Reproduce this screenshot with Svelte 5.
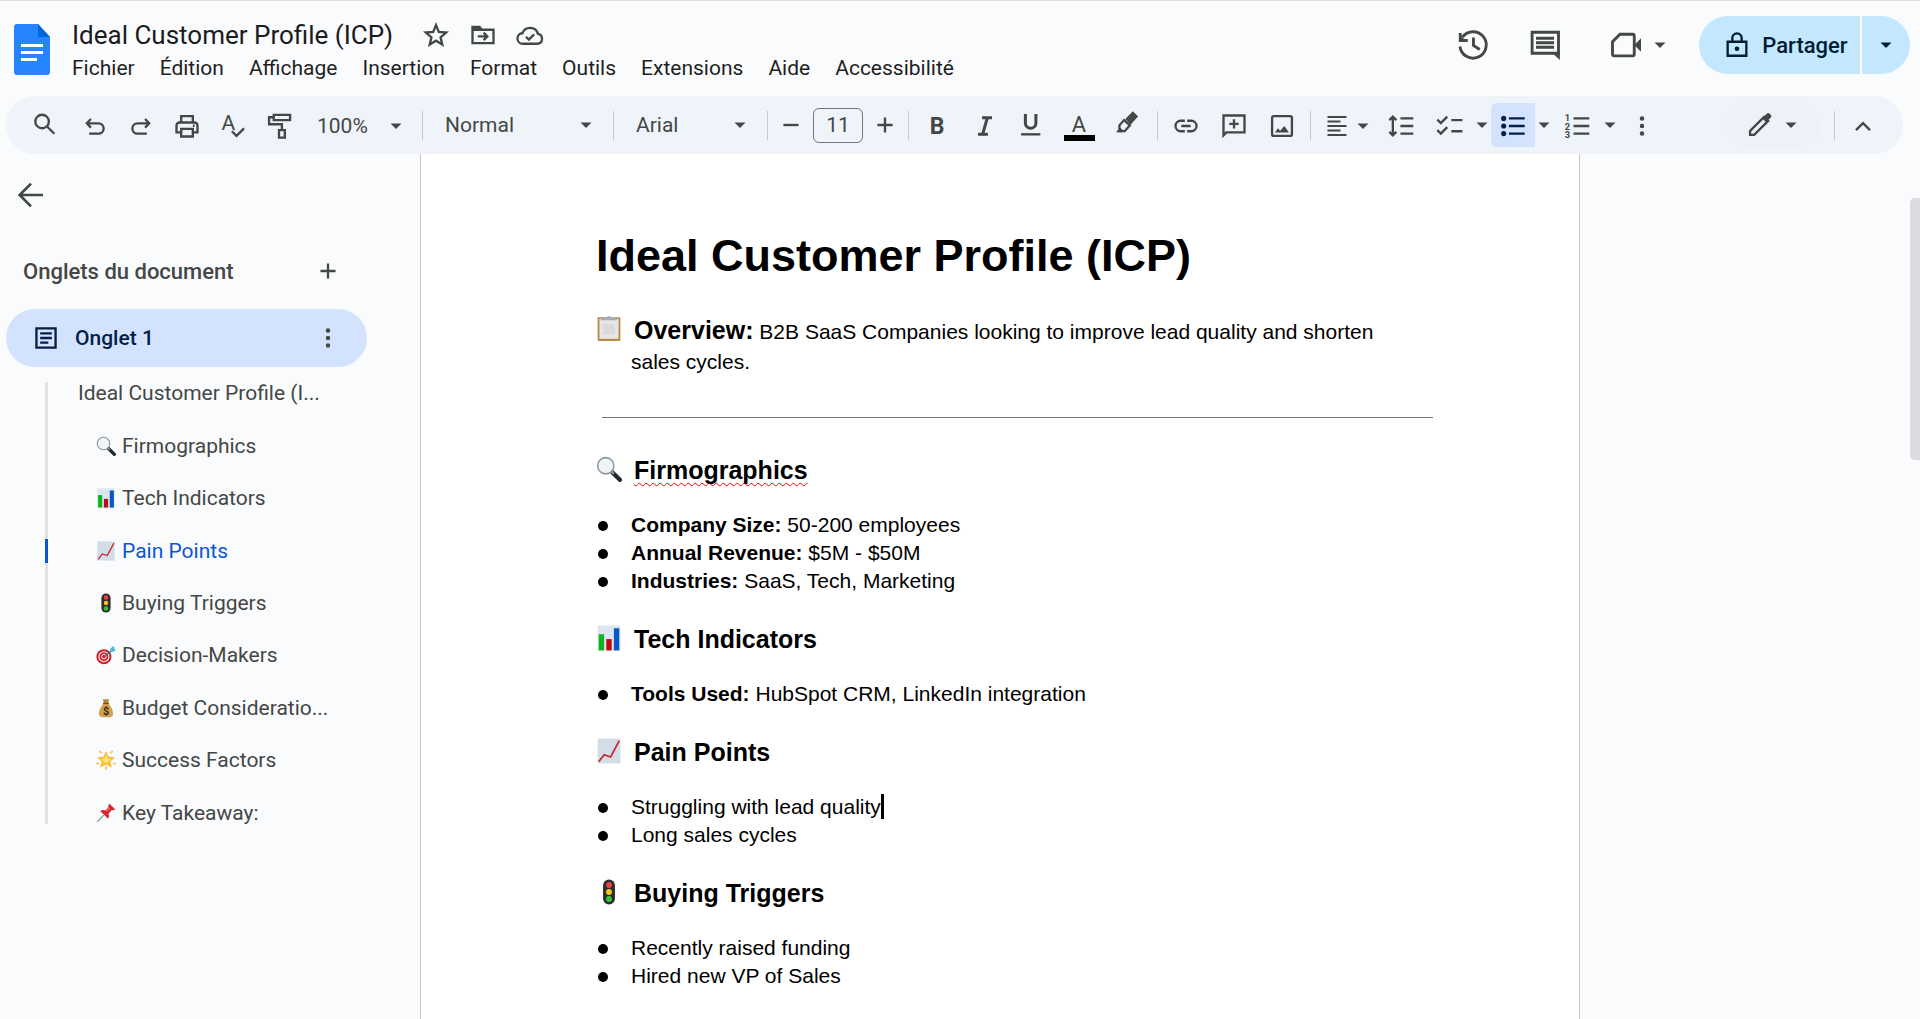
<script>
  const menus = [
    "Fichier",
    "Édition",
    "Affichage",
    "Insertion",
    "Format",
    "Outils",
    "Extensions",
    "Aide",
    "Accessibilité",
  ];

  const outline = [
    { icon: "search", label: "Firmographics" },
    { icon: "bars", label: "Tech Indicators" },
    { icon: "chart", label: "Pain Points" },
    { icon: "light", label: "Buying Triggers" },
    { icon: "target", label: "Decision-Makers" },
    { icon: "money", label: "Budget Consideratio..." },
    { icon: "star", label: "Success Factors" },
    { icon: "pin", label: "Key Takeaway:" },
  ];

  const sections = [
    {
      icon: "search",
      title: "Firmographics",
      misspelled: true,
      items: [
        { name: "Company Size:", text: "50-200 employees" },
        { name: "Annual Revenue:", text: "$5M - $50M" },
        { name: "Industries:", text: "SaaS, Tech, Marketing" },
      ],
    },
    {
      icon: "bars",
      title: "Tech Indicators",
      items: [{ name: "Tools Used:", text: "HubSpot CRM, LinkedIn integration" }],
    },
    {
      icon: "chart",
      title: "Pain Points",
      items: [
        { text: "Struggling with lead quality", caret: true },
        { text: "Long sales cycles" },
      ],
    },
    {
      icon: "light",
      title: "Buying Triggers",
      items: [{ text: "Recently raised funding" }, { text: "Hired new VP of Sales" }],
    },
  ];

  let docTitle = $state("Ideal Customer Profile (ICP)");
  let fontSize = $state(11);
  let active = $state("Pain Points");
</script>

{#snippet caret()}
  <svg class="caret" viewBox="0 0 20 20" aria-hidden="true"><path d="M4.500 7.500h11L10 13z" /></svg>
{/snippet}

{#snippet emoji(name)}
  <svg class="emoji" viewBox="0 0 24 24" aria-hidden="true">
    {#if name === "search"}
      <path d="M15 15l7 7" stroke="#26292c" stroke-width="4" stroke-linecap="round" />
      <path d="M13.500 13.500l3 3" stroke="#8a949c" stroke-width="2" />
      <circle cx="9" cy="9" r="7.500" fill="#f1f4f5" stroke="#8796a3" stroke-width="1.400" />
    {:else if name === "bars"}
      <path d="M1.500 0.500h21v23h-21z" fill="#dce6f0" />
      <path d="M2.500 8.500h5v15h-5z" fill="#0cb51c" />
      <path d="M9.500 13h5v10.500h-5z" fill="#c00a14" />
      <path d="M16.500 3h5v20.500h-5z" fill="#0a58c6" />
    {:else if name === "chart"}
      <path d="M1.500 0.500h21v23h-21z" fill="#d3dde5" />
      <path d="M2.500 22l5-6.500 6 2 8-15" fill="none" stroke="#c8222b" stroke-width="1.500" />
    {:else if name === "light"}
      <rect x="6.500" y="0.500" width="11" height="23" rx="5.500" fill="#2c2d2e" />
      <circle cx="12" cy="5.500" r="2.700" fill="#ee3f46" />
      <circle cx="12" cy="12" r="2.700" fill="#f7c51e" />
      <circle cx="12" cy="18.500" r="2.700" fill="#35c534" />
    {:else if name === "target"}
      <circle cx="9.500" cy="14" r="9" fill="#cf1f2c" />
      <circle cx="9.500" cy="14" r="6" fill="none" stroke="#fff" stroke-width="1.300" />
      <circle cx="9.500" cy="14" r="2.700" fill="none" stroke="#fff" stroke-width="1.200" />
      <path d="M10 14l9-7" stroke="#267f93" stroke-width="1.500" />
      <path d="M16.500 8.500l1-4.500 4-3 .5 3.500 2 1.500-3.500 2.500z" fill="#57bccb" />
    {:else if name === "money"}
      <path d="M8 1l2 1 2-1 2 1 2-1-1.500 5h-5z" fill="#b98432" />
      <path d="M9 6.500h6c3 3 5.500 8 5.500 12 0 3-2 4.500-4.500 4.500H8c-2.500 0-4.500-1.500-4.500-4.500 0-4 2.500-9 5.500-12z" fill="#d0a04e" />
      <path d="M8.500 6.500h7" stroke="#73511f" stroke-width="1.500" />
      <text x="12" y="20" font-size="13" font-weight="700" text-anchor="middle" fill="#33291a">$</text>
    {:else if name === "star"}
      <path d="M12 2.500l2.800 6 7.200.7-5.300 4.600 1.800 6.700-6.500-3.500L5.500 20.500l1.800-6.700L2 9.200l7.200-.7z" fill="#fbc62c" stroke="#f2a51b" stroke-width=".6" />
      <path d="M12 6l1.800 4.500 4 .5-3.500 2.500-2.300 2-2.500-2-3-2.500 3.700-.5z" fill="#ffe98a" />
      <path d="M4.500 1.500l1.500 2M19.500 1.500l-1.500 2M1 16.500l2-.7M23 16.500l-2-.7M12 20v3" stroke="#f8bd32" stroke-width="1.800" stroke-linecap="round" />
    {:else if name === "pin"}
      <path d="M1.500 22.500l8-8" stroke="#8d959b" stroke-width="1.400" />
      <path d="M5 9.500c3-1.500 5-1 6-.5l4-4c-.5-1.500 0-3 1-4l7 6.500c-1 1-2.500 1.500-4 1l-4 4.500c1 2.500.5 4.500-.5 6z" fill="#d9252f" />
      <path d="M11 9l4-4 2 1.500-4 4z" fill="#f0666c" />
    {:else if name === "clipboard"}
      <rect x="1.500" y="2" width="21" height="22" rx="1" fill="#b98a4b" />
      <path d="M3.200 3.500h17.600v18.500H3.200z" fill="#e6e6e6" />
      <path d="M6.500 8.500h11v9.500h-11z" fill="#dadada" />
      <path d="M4.500 2.500h5.300a2.300 2.300 0 0 1 4.400 0h5.300v2.300h-15z" fill="#a8adb1" />
    {/if}
  </svg>
{/snippet}

<div class="app">
  <header class="header">
    <svg class="logo" viewBox="0 0 36 51" aria-hidden="true">
      <path d="M3 0h21l12 13v35a3 3 0 0 1-3 3H3a3 3 0 0 1-3-3V3a3 3 0 0 1 3-3z" fill="#2684fc" />
      <path d="M24 0l12 13H24z" fill="#0066da" />
      <path d="M7 21.500h22M7 28.500h22M7 35.500h16" stroke="#fff" stroke-width="2.800" />
    </svg>

    <div class="heading">
      <div class="title-row">
        <input class="doc-title" aria-label="Titre du document" bind:value={docTitle} />
        <button class="title-btn" aria-label="Suivre">
          <svg class="icon" viewBox="0 0 24 24"><path d="M12 3.500l2.400 5.900 6.300.5-4.800 4.100 1.500 6.200-5.400-3.300-5.400 3.300 1.500-6.200-4.800-4.100 6.300-.5z" /></svg>
        </button>
        <button class="title-btn" aria-label="Déplacer">
          <svg class="icon" viewBox="0 0 24 24">
            <path d="M3 5h6l2 2.500h10V19H3zM7.500 13.200h8M12.500 10l3.200 3.200-3.200 3.200" />
            <path class="solid" d="M2.500 4.500H9L11 7v1.500H2.500z" />
          </svg>
        </button>
        <button class="title-btn" aria-label="État du document">
          <svg class="icon" viewBox="0 0 24 24"><path d="M6 19.500a4.500 4.500 0 0 1-.5-9A7 7 0 0 1 18.800 11 4.300 4.300 0 0 1 18.500 19.500zM8.500 13.500l2.500 2.500 4.500-4.500" /></svg>
        </button>
      </div>
      <nav class="menus">
        {#each menus as menu}
          <button class="menu">{menu}</button>
        {/each}
      </nav>
    </div>

    <div class="actions">
      <button class="action" aria-label="Historique">
        <svg class="icon huge" viewBox="0 0 24 24">
          <path d="M3.300 13a8.800 8.800 0 1 0 1.700-6.300M12.300 7v5.300l4.200 2.700" />
          <path d="M3.500 4v5h5" />
          <path class="solid" d="M3 5l4.500 4.500H3z" />
        </svg>
      </button>
      <button class="action" aria-label="Commentaires">
        <svg class="icon huge" viewBox="0 0 24 24">
          <path d="M3.400 3.500h17.600V17.500H3.400zM6 7.500h12M6 10.500h12M6 13.500h12" />
          <path class="solid" d="M17 17.500l4.900 4.500V16z" />
        </svg>
      </button>
      <button class="meet" aria-label="Visioconférence">
        <svg class="icon huge" viewBox="0 0 24 24">
          <path d="M8 4.800h8.500a1 1 0 0 1 1 1v12.400a1 1 0 0 1-1 1H4a1 1 0 0 1-1-1V9.800z" />
          <path class="solid" d="M17.500 12l4.500-4.500v9z" />
        </svg>
        {@render caret()}
      </button>
      <div class="share">
        <button class="share-main">
          <svg class="icon" viewBox="0 0 24 24">
            <path d="M4 9.200h16v12H4zM8 9V6a4 4 0 0 1 8 0v3" />
            <circle class="solid" cx="12" cy="15.200" r="2" />
          </svg>
          Partager
        </button>
        <button class="share-more" aria-label="Options de partage">{@render caret()}</button>
      </div>
    </div>
  </header>

  <div class="toolbar" role="toolbar" aria-label="Outils">
    <button class="tool search" aria-label="Rechercher">
      <svg class="icon" viewBox="0 0 24 24"><circle cx="9.500" cy="9" r="5.800" /><path d="M14 13.500l6 6" /></svg>
    </button>
    <button class="tool" aria-label="Annuler">
      <svg class="icon" viewBox="0 0 24 24"><path d="M8.500 6L5 9.700l3.500 3.700M5 9.700h10a4.400 4.400 0 0 1 0 8.800H7" /></svg>
    </button>
    <button class="tool" aria-label="Rétablir">
      <svg class="icon" viewBox="0 0 24 24"><path d="M15.500 6L19 9.700l-3.500 3.700M19 9.700H9a4.400 4.400 0 0 0 0 8.800h8" /></svg>
    </button>
    <button class="tool" aria-label="Imprimer">
      <svg class="icon" viewBox="0 0 24 24"><path d="M7 8.500V3.500h10v5M7 17.500H3v-6a2.500 2.500 0 0 1 2.500-2.500h13a2.500 2.500 0 0 1 2.500 2.500v6h-4M7 14.500h10V21H7zM17 11.800h1.500" /></svg>
    </button>
    <button class="tool" aria-label="Orthographe">
      <svg class="icon" viewBox="0 0 24 24">
        <text class="glyph" x="8" y="15" font-size="18" text-anchor="middle">A</text>
        <path d="M11 16.500l4 4 6.500-6.500" />
      </svg>
    </button>
    <button class="tool" aria-label="Reproduire la mise en forme">
      <svg class="icon" viewBox="0 0 24 24"><path d="M7.500 2.500h14v4.500h-14zM7.500 4.500H3.500v6h11v5M12 15.500h5V22h-5z" /></svg>
    </button>
    <span class="picker zoom">
      <select aria-label="Zoom"><option>100%</option><option>125%</option></select>
      {@render caret()}
    </span>
    <span class="sep"></span>
    <span class="picker style">
      <select aria-label="Styles"><option>Normal</option><option>Titre</option></select>
      {@render caret()}
    </span>
    <span class="sep"></span>
    <span class="picker font">
      <select aria-label="Police"><option>Arial</option><option>Roboto</option></select>
      {@render caret()}
    </span>
    <span class="sep"></span>
    <div class="size">
      <button class="step" aria-label="Réduire la taille" onclick={() => fontSize--}>
        <svg class="icon" viewBox="0 0 24 24"><path d="M5.500 12h13" /></svg>
      </button>
      <input aria-label="Taille de police" bind:value={fontSize} />
      <button class="step" aria-label="Augmenter la taille" onclick={() => fontSize++}>
        <svg class="icon" viewBox="0 0 24 24"><path d="M5.500 12h13M12 5.500v13" /></svg>
      </button>
    </div>
    <span class="sep"></span>
    <button class="tool wide bold">B</button>
    <button class="tool wide" aria-label="Italique">
      <svg class="icon" viewBox="0 0 24 24"><path class="heavy" d="M9.500 5H18M6 19h8.500M14 5l-4 14" /></svg>
    </button>
    <button class="tool wide underline" aria-label="Souligné">
      <svg class="icon" viewBox="0 0 24 24"><path class="heavy" d="M7.200 2.500v7.800a4.500 4.500 0 0 0 9 0V2.500" /><path d="M3.500 20h16.500" /></svg>
    </button>
    <button class="tool wide color"><span>A</span></button>
    <button class="tool wide highlight" aria-label="Surlignage">
      <svg class="icon" viewBox="0 0 24 24">
        <path d="M9.500 9.500l5 4.500-4.500 5H5.500v-5z" />
        <path class="solid" d="M10.500 8.500L17 2l4.500 4.500-6.500 7zM2.500 20l3.500-4 3 2.500L8 20z" />
      </svg>
    </button>
    <span class="sep"></span>
    <button class="tool wide" aria-label="Lien">
      <svg class="icon" viewBox="0 0 24 24"><path d="M11 7.500H7.500a4.500 4.500 0 0 0 0 9H11M13 7.500h3.500a4.500 4.500 0 0 1 0 9H13M8 12h8" /></svg>
    </button>
    <button class="tool wide" aria-label="Ajouter un commentaire">
      <svg class="icon" viewBox="0 0 24 24">
        <path d="M3 3h18v14.500H5.500L3 20zM12 6.200v8M8 10.200h8" />
      </svg>
    </button>
    <button class="tool wide" aria-label="Image">
      <svg class="icon" viewBox="0 0 24 24">
        <rect x="3.500" y="3.500" width="17" height="17" rx="1.500" />
        <path class="solid" d="M6 17.500l2.500-3.500 2 2 3.500-4 4 5.500z" />
      </svg>
    </button>
    <span class="sep"></span>
    <button class="align" aria-label="Alignement">
      <svg class="icon list" viewBox="0 0 24 24"><path d="M2.500 3h19M2.500 7.500h13M2.500 12h19M2.500 16.500h13M2.500 21h19" /></svg>
      {@render caret()}
    </button>
    <button class="tool wide" aria-label="Interligne">
      <svg class="icon" viewBox="0 0 24 24"><path d="M5 4.500v15M2 7l3-3 3 3M2 17l3 3 3-3M11.500 5.500h11M11.500 12h11M11.500 18.500h11" /></svg>
    </button>
    <button class="tool wide" aria-label="Liste de contrôle">
      <svg class="icon" viewBox="0 0 24 24"><path d="M2 6.500l3 3 5.500-5.500M2 15.500l3 3 5.500-5.500M14 7h9.500M14 16.500h9.500" /></svg>
    </button>
    <button class="drop" aria-label="Options de liste de contrôle">{@render caret()}</button>
    <button class="tool selected" aria-label="Liste à puces" aria-pressed="true">
      <svg class="icon" viewBox="0 0 24 24">
        <path d="M8.500 5.500H22M8.500 12H22M8.500 18.500H22" />
        <circle class="solid" cx="4" cy="5.500" r="2.200" />
        <circle class="solid" cx="4" cy="12" r="2.200" />
        <circle class="solid" cx="4" cy="18.500" r="2.200" />
      </svg>
    </button>
    <button class="drop" aria-label="Options de liste à puces">{@render caret()}</button>
    <button class="tool wide" aria-label="Liste numérotée">
      <svg class="icon" viewBox="0 0 24 24">
        <path d="M9 5.500h13.500M9 12h13.500M9 18.500h13.500" />
        <g class="glyph" font-size="8" font-weight="700">
          <text x="1.500" y="7.500">1</text>
          <text x="1.500" y="15">2</text>
          <text x="1.500" y="22.500">3</text>
        </g>
      </svg>
    </button>
    <button class="drop" aria-label="Options de liste numérotée">{@render caret()}</button>
    <button class="tool" aria-label="Plus">
      <svg class="icon" viewBox="0 0 24 24">
        <circle class="solid" cx="12" cy="5.500" r="1.900" />
        <circle class="solid" cx="12" cy="12" r="1.900" />
        <circle class="solid" cx="12" cy="18.500" r="1.900" />
      </svg>
    </button>
    <button class="mode" aria-label="Mode édition">
      <svg class="icon" viewBox="0 0 24 24">
        <path d="M3.500 17L15.500 5l3.500 3.500L7 20.500H3.500z" />
        <path class="solid" d="M14 6.500l3.500-4c1-1 2-1 3 0l.5.500c1 1 1 2 0 3l-4 3.500z" />
      </svg>
      {@render caret()}
    </button>
    <span class="sep"></span>
    <button class="tool wide" aria-label="Masquer les menus">
      <svg class="icon" viewBox="0 0 24 24"><path d="M6 15.500l6-6 6 6" /></svg>
    </button>
  </div>

  <main class="workspace">
    <aside class="sidebar">
      <button class="back" aria-label="Fermer les onglets">
        <svg class="icon large" viewBox="0 0 24 24"><path d="M21 12H4M12 3.500L3.500 12l8.500 8.500" /></svg>
      </button>
      <div class="tabs-head">
        <h2>Onglets du document</h2>
        <button class="step" aria-label="Ajouter un onglet">
          <svg class="icon" viewBox="0 0 24 24"><path d="M5.500 12h13M12 5.500v13" /></svg>
        </button>
      </div>
      <div class="tab">
        <svg class="icon" viewBox="0 0 24 24"><path d="M3.800 3.800h16.400v16.400H3.800zM7 8h10M7 12h10M7 16h7" /></svg>
        <span>Onglet 1</span>
        <button class="step" aria-label="Options de l'onglet">
          <svg class="icon" viewBox="0 0 24 24">
            <circle class="solid" cx="12" cy="5.500" r="1.900" />
            <circle class="solid" cx="12" cy="12" r="1.900" />
            <circle class="solid" cx="12" cy="18.500" r="1.900" />
          </svg>
        </button>
      </div>
      <div class="outline">
        <span class="rail"></span>
        <ul>
          <li><a class="top" href="#doc">Ideal Customer Profile (I...</a></li>
          {#each outline as item}
            <li class:active={active === item.label}>
              <a href="#doc" onclick={() => (active = item.label)}>
                {@render emoji(item.icon)}
                {item.label}
              </a>
            </li>
          {/each}
        </ul>
      </div>
    </aside>

    <article class="page" id="doc">
      <h1>Ideal Customer Profile (ICP)</h1>
      <div class="overview">
        {@render emoji("clipboard")}
        <p><b>Overview:</b> B2B SaaS Companies looking to improve lead quality and shorten sales cycles.</p>
      </div>
      <hr />
      {#each sections as section}
        <h3>
          {@render emoji(section.icon)}
          <span class:misspelled={section.misspelled}>{section.title}</span>
        </h3>
        <ul>
          {#each section.items as item}
            <li>
              {#if item.name}<b>{item.name}</b>{/if}
              {item.text}{#if item.caret}<span class="cursor"></span>{/if}
            </li>
          {/each}
        </ul>
      {/each}
    </article>

    <div class="gutter"><span class="thumb"></span></div>
  </main>
</div>

<style>
  :global(body) {
    margin: 0;
    background: #f9fbfd;
  }

  .app {
    display: flex;
    flex-direction: column;
    min-height: 100vh;
    box-sizing: border-box;
    border-top: 1px solid #dcdedc;
    font-family: Roboto, "Open Sans", sans-serif;
    font-size: 21px;
    color: #444746;
  }

  button,
  input,
  select {
    margin: 0;
    padding: 0;
    border: 0;
    background: none;
    font: inherit;
    color: inherit;
  }

  button {
    display: flex;
    align-items: center;
    justify-content: center;
    flex: none;
    cursor: pointer;
  }

  .icon {
    flex: none;
    width: 28px;
    height: 28px;
    fill: none;
    stroke: currentColor;
    stroke-width: 2;
  }
  .icon.large {
    width: 32px;
    height: 32px;
  }
  .icon.huge {
    width: 36px;
    height: 36px;
    stroke-width: 1.9;
  }
  .icon.list {
    width: 24px;
    height: 24px;
  }
  .icon .solid,
  .icon .glyph {
    fill: currentColor;
    stroke: none;
  }
  .icon .heavy {
    stroke-width: 2.6;
  }

  .caret {
    flex: none;
    width: 20px;
    height: 20px;
    fill: currentColor;
  }

  .emoji {
    flex: none;
    width: 20px;
    height: 20px;
    fill: none;
  }

  /* header */
  .header {
    display: flex;
    padding: 15px 10px 0 14px;
    height: 80px;
  }
  .logo {
    width: 36px;
    height: 51px;
    margin: 8px 22px 0 0;
  }
  .title-row {
    display: flex;
    align-items: center;
    height: 38px;
  }
  .doc-title {
    width: 340px;
    font-size: 26px;
    color: #1b1c1d;
  }
  .title-btn {
    width: 47px;
  }
  .menus {
    display: flex;
    gap: 25px;
  }
  .menu {
    height: 28px;
    color: #1f1f1f;
  }
  .actions {
    display: flex;
    height: 58px;
    margin-left: auto;
  }
  .action {
    width: 72px;
  }
  .meet {
    gap: 6px;
    width: 116px;
    margin-right: 2px;
  }
  .share {
    display: flex;
    gap: 2px;
    border-radius: 29px;
    overflow: hidden;
    font-size: 22px;
    font-weight: 500;
    color: #001d35;
  }
  .share button {
    background: #c2e7ff;
  }
  .share-main {
    gap: 11px;
    width: 161px;
    padding-left: 12px;
    box-sizing: border-box;
  }
  .share-more {
    width: 48px;
  }

  /* toolbar */
  .toolbar {
    display: flex;
    align-items: center;
    height: 58px;
    margin: 0 17px 0 6px;
    padding: 0 16px 0 10px;
    border-radius: 29px;
    background: #eff3fa;
  }
  .tool {
    box-sizing: border-box;
    width: 46px;
    height: 44px;
    padding-top: 2px;
  }
  .tool.search {
    width: 56px;
    padding: 0 0 0 2px;
  }
  .tool.wide {
    width: 48px;
  }
  .tool.bold {
    font-size: 23px;
    font-weight: 700;
  }
  .tool.underline,
  .tool.color,
  .tool.highlight {
    padding: 0 4px 0 0;
  }
  .tool.highlight {
    padding-bottom: 4px;
  }
  .tool.color span {
    width: 31px;
    margin-top: 4px;
    border-bottom: 6px solid #000;
    font-size: 22px;
    line-height: 21px;
  }
  .tool.selected {
    width: 44px;
    border-radius: 6px 0 0 6px;
    background: #d3e3fd;
    color: #041e49;
  }
  .picker {
    display: grid;
    align-items: center;
    box-sizing: border-box;
    padding: 0 13px 0 18px;
  }
  .picker > :global(*) {
    grid-area: 1 / 1;
  }
  .picker .caret {
    justify-self: end;
    pointer-events: none;
  }
  .picker select {
    appearance: none;
    width: 100%;
  }
  .picker.zoom {
    width: 116px;
    padding: 2px 12px 0 15px;
  }
  .picker.style {
    width: 182px;
  }
  .picker.font {
    width: 145px;
  }
  .sep {
    flex: none;
    width: 1px;
    height: 29px;
    margin: 0 4px;
    background: #c7c9cc;
  }
  .size {
    display: flex;
    align-items: center;
    gap: 11px;
    padding: 0 8px;
  }
  .size input {
    box-sizing: border-box;
    width: 50px;
    height: 35px;
    border: 1px solid #747775;
    border-radius: 6px;
    text-align: center;
  }
  .step {
    width: 22px;
    height: 30px;
  }
  .align {
    box-sizing: border-box;
    gap: 4px;
    width: 62px;
    height: 44px;
    padding: 2px 0 0 6px;
  }
  .drop {
    width: 18px;
    height: 44px;
  }
  .mode {
    gap: 7px;
    width: 94px;
    height: 44px;
    margin: 0 10px 0 auto;
    border-radius: 22px;
    background: #edf2fa;
  }

  /* left panel */
  .workspace {
    display: grid;
    grid-template-columns: 420px minmax(0, 1160px) minmax(20px, 1fr);
    flex: 1;
  }
  .sidebar {
    padding: 20px 53px 0 6px;
  }
  .back {
    width: 50px;
    height: 42px;
  }
  .tabs-head {
    display: flex;
    align-items: center;
    justify-content: space-between;
    height: 30px;
    margin: 40px 28px 23px 17px;
  }
  .tabs-head h2 {
    margin: 0;
    font-size: 22px;
    font-weight: 500;
  }
  .tab {
    display: flex;
    align-items: center;
    height: 58px;
    padding: 0 28px 0 26px;
    border-radius: 29px;
    background: #d3e3fd;
    color: #041e49;
    font-weight: 500;
  }
  .tab span {
    flex: 1;
    margin-left: 15px;
  }
  .tab .step {
    color: #444746;
  }
  .outline {
    display: flex;
    height: 472px;
  }
  .rail {
    width: 3px;
    margin: 15px 0 15px 39px;
    background: #e1e3e1;
  }
  .outline ul {
    display: flex;
    flex: 1;
    flex-direction: column;
    margin: 0;
    padding: 0;
    list-style: none;
  }
  .outline li {
    position: relative;
    display: flex;
    flex: 1;
    align-items: center;
  }
  .outline li.active::before {
    content: "";
    position: absolute;
    left: -3px;
    width: 3px;
    height: 24px;
    background: #0b57d0;
  }
  .outline a {
    display: flex;
    align-items: center;
    gap: 6px;
    padding-left: 48px;
    color: inherit;
    text-decoration: none;
    white-space: nowrap;
  }
  .outline a.top {
    padding-left: 30px;
  }
  .outline .active a {
    color: #0b57d0;
  }

  /* document */
  .page {
    padding: 74px 146px 20px 175px;
    border: solid #c7c7c7;
    border-width: 0 1px;
    background: #fff;
    color: #000;
    font-family: "Liberation Sans", Arial, sans-serif;
    font-size: 21px;
    line-height: 28px;
  }
  .page h1 {
    margin: 0 0 31px;
    font-size: 45px;
    line-height: 56px;
  }
  .page .emoji {
    width: 26px;
    height: 26px;
  }
  .overview {
    display: flex;
    gap: 9px;
    padding-right: 30px;
    line-height: 30px;
  }
  .overview p {
    margin: 0;
    text-indent: 3px;
  }
  .overview b {
    font-size: 25px;
  }
  .page hr {
    height: 1px;
    margin: 40px 0 35px 6px;
    border: 0;
    background: #777;
  }
  .page h3 {
    display: flex;
    gap: 12px;
    margin: 0 0 24px;
    font-size: 25px;
    line-height: 34px;
  }
  .page h3 .emoji {
    margin-top: 3px;
  }
  .misspelled {
    text-decoration: underline wavy #f00 1px;
    text-decoration-skip-ink: none;
    text-underline-offset: 3px;
  }
  .page ul {
    margin: 0 0 27px;
    padding: 0;
    list-style: none;
  }
  .page li {
    position: relative;
    padding-left: 35px;
  }
  .page li::before {
    content: "";
    position: absolute;
    top: 10px;
    left: 2px;
    width: 10px;
    height: 10px;
    border-radius: 50%;
    background: #000;
  }
  .cursor {
    display: inline-block;
    width: 3px;
    height: 25px;
    margin-right: -3px;
    background: #000;
    vertical-align: -5px;
  }

  .gutter {
    display: flex;
    justify-content: flex-end;
  }
  .thumb {
    width: 10px;
    height: 262px;
    margin-top: 44px;
    border-radius: 5px 0 0 5px;
    background: #dadce0;
  }
</style>
